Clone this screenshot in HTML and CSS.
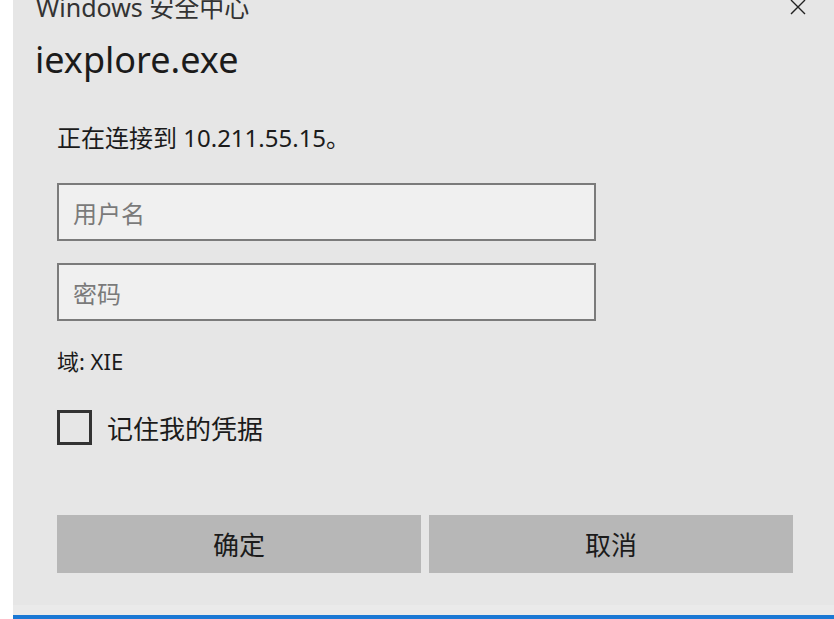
FILE: index.html
```html
<!DOCTYPE html>
<html lang="zh-CN">
<head>
<meta charset="utf-8">
<title>Windows 安全中心</title>
<link rel="stylesheet" href="styles.css">
</head>
<body>
<div class="dialog">
  <div class="titlebar">
    <span class="title">Windows 安全中心</span>
    <svg class="close" width="16" height="16" viewBox="0 0 16 16"><path d="M1 1 L15 15 M15 1 L1 15" stroke="#222" stroke-width="1.4" fill="none"/></svg>
  </div>
  <h1 class="app">iexplore.exe</h1>
  <div class="body">
    <p class="msg">正在连接到 10.211.55.15。</p>
    <div class="field"><span class="ph">用户名</span></div>
    <div class="field"><span class="ph">密码</span></div>
    <p class="domain">域: XIE</p>
    <label class="remember"><span class="box"></span><span>记住我的凭据</span></label>
    <div class="buttons">
      <div class="btn">确定</div>
      <div class="btn">取消</div>
    </div>
  </div>
</div>
</body>
</html>
```
FILE: styles.css
```css
html, body {
  margin: 0;
  padding: 0;
  background: #ffffff;
  height: 619px;
  overflow: hidden;
}
body {
  font-family: "Noto Sans", "Noto Sans CJK SC", sans-serif;
  color: #1b1b1b;
}
.dialog {
  margin-left: 13px;
  height: 615px;
  background: #e6e6e6;
  box-shadow: inset 0 -10px 0 #eaeaea;
  border-bottom: 4px solid #1a78d4;
  display: flex;
  flex-direction: column;
}
.titlebar {
  margin-top: -8px;
  height: 30px;
  display: flex;
  align-items: center;
  justify-content: space-between;
  padding: 0 28px 0 23px;
}
.title {
  font-size: 25px;
  line-height: 30px;
  color: #333;
}
.app {
  margin: 18px 0 0 22px;
  font-size: 36px;
  font-weight: normal;
  line-height: 40px;
  color: #1b1b1b;
}
.body {
  padding: 0 41px 0 44px;
  display: flex;
  flex-direction: column;
}
.msg {
  margin: 43px 0 0;
  font-size: 24px;
  line-height: 30px;
}
.field {
  margin-top: 30px;
  height: 54px;
  width: 521px;
  border: 2px solid #7b7b7b;
  background: #f0f0f0;
  display: flex;
  align-items: center;
  padding-left: 14px;
}
.field + .field {
  margin-top: 22px;
}
.ph {
  font-size: 24px;
  color: #7a7a7a;
}
.domain {
  margin: 25px 0 0;
  font-size: 22px;
  line-height: 30px;
}
.remember {
  margin-top: 34px;
  height: 35px;
  display: flex;
  align-items: center;
  gap: 15px;
  font-size: 26px;
}
.box {
  width: 29px;
  height: 29px;
  border: 3px solid #333;
}
.buttons {
  margin-top: 70px;
  display: grid;
  grid-template-columns: 1fr 1fr;
  gap: 8px;
}
.btn {
  height: 58px;
  background: #b7b7b7;
  display: flex;
  align-items: center;
  justify-content: center;
  font-size: 26px;
  color: #1b1b1b;
}
```
